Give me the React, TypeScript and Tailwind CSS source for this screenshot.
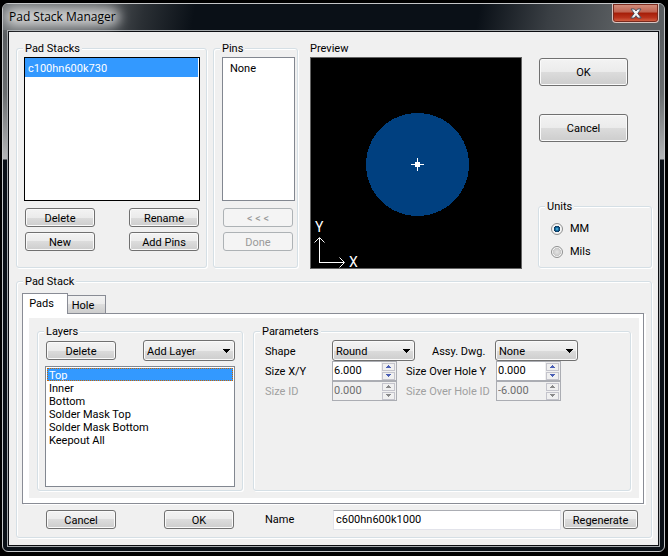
import { useState } from 'react';
import type { ReactNode } from 'react';
import clsx from 'clsx';

const layers = ['Top', 'Inner', 'Bottom', 'Solder Mask Top', 'Solder Mask Bottom', 'Keepout All'];

const faceStyle =
  'bg-[linear-gradient(#f3f3f3,#ebebeb_50%,#dcdcdc_50%,#cdcdcd)] shadow-[inset_0_0_0_1px_#fafafa]';

interface GroupBoxProps {
  title: string;
  className?: string;
  children: ReactNode;
}

function GroupBox({ title, className, children }: GroupBoxProps) {
  return (
    <fieldset
      className={clsx(
        'min-w-0 rounded-[3px] border border-[#d5dfe5] shadow-[1px_1px_0_#fff,inset_1px_1px_0_#fff]',
        className
      )}
    >
      <legend className="ml-[6px] h-[14px] bg-[#f0f0f0] px-[2px] leading-[16px]">{title}</legend>
      {children}
    </fieldset>
  );
}

interface ButtonProps {
  children: ReactNode;
  className?: string;
  disabled?: boolean;
}

function Button({ children, className = 'h-[19px] w-[70px]', disabled }: ButtonProps) {
  return (
    <button
      type="button"
      disabled={disabled}
      className={clsx(
        'flex shrink-0 items-center justify-center rounded-[3px] border pt-[2px]',
        disabled ? 'border-[#adb2b5] bg-[#f4f4f4] text-[#9a9a9a]' : ['border-[#707070]', faceStyle],
        className
      )}
    >
      {children}
    </button>
  );
}

interface DropDownProps {
  id: string;
  options: string[];
  label?: string;
  className: string;
}

function DropDown({ id, options, label, className }: DropDownProps) {
  return (
    <div className={clsx('relative h-[21px] shrink-0', className)}>
      <select
        id={id}
        aria-label={label}
        className={clsx(
          'h-full w-full appearance-none rounded-[3px] border border-[#707070] pt-[2px] pl-[3px]',
          faceStyle
        )}
      >
        {options.map((option) => (
          <option key={option}>{option}</option>
        ))}
      </select>
      <svg
        className="pointer-events-none absolute top-[9px] right-[5px]"
        width="7"
        height="4"
        viewBox="0 0 7 4"
        shapeRendering="crispEdges"
      >
        <path d="M0 0h7v1h-1v1h-1v1h-1v1h-1v-1h-1v-1h-1v-1h-1z" fill="#000" />
      </svg>
    </div>
  );
}

interface SpinnerProps {
  id: string;
  initial: number;
  disabled?: boolean;
}

function Spinner({ id, initial, disabled }: SpinnerProps) {
  const [value, setValue] = useState(initial.toFixed(3));
  const step = (delta: number) => setValue((Number(value) + delta).toFixed(3));
  const arrow = disabled ? '#8a8a8a' : '#4a5fb5';
  const stepButton =
    'flex h-2 w-[13px] items-center justify-center border border-[#c4c4cc] bg-[#f0f0f0]';

  return (
    <div
      className={clsx(
        'flex h-5 w-[65px] shrink-0 border border-[#abadb3]',
        disabled ? 'bg-[#f0f0f0] text-[#6d6d6d]' : 'bg-white'
      )}
    >
      <input
        id={id}
        value={value}
        disabled={disabled}
        onChange={(e) => setValue(e.target.value)}
        className="h-4 w-0 min-w-0 flex-1 pl-px outline-none"
      />
      <div className="flex flex-col justify-center gap-px bg-[#f0f0f0] px-px">
        <button type="button" aria-label="Increase" disabled={disabled} onClick={() => step(0.1)} className={stepButton}>
          <svg width="5" height="3" viewBox="0 0 5 3" shapeRendering="crispEdges">
            <path d="M2 0h1v1h1v1h1v1h-5v-1h1v-1h1z" fill={arrow} />
          </svg>
        </button>
        <button type="button" aria-label="Decrease" disabled={disabled} onClick={() => step(-0.1)} className={stepButton}>
          <svg width="5" height="3" viewBox="0 0 5 3" shapeRendering="crispEdges">
            <path d="M0 0h5v1h-1v1h-1v1h-1v-1h-1v-1h-1z" fill={arrow} />
          </svg>
        </button>
      </div>
    </div>
  );
}

function Preview() {
  return (
    <div className="flex w-[212px] shrink-0 flex-col gap-[2px]">
      <h2 className="h-[14px] leading-[16px]">Preview</h2>
      <svg viewBox="0 0 210 210" className="w-full border border-[#646464] bg-black">
        <circle cx="106.5" cy="106.5" r="51.5" fill="#004080" shapeRendering="crispEdges" />
        <g stroke="#fff" fill="none">
          <path d="M106.5 100v13M100 106.5h13" />
          <path d="M8.5 180v25M8 204.5h25" />
          <path d="M3.5 184.5l5-5l5 5M28.5 199.5l5 5l-5 5" />
        </g>
        <path d="M104 104h5v5h-5z" fill="#fff" />
        <text x="4" y="174" fill="#fff" fontSize="14">Y</text>
        <text x="38" y="209" fill="#fff" fontSize="14">X</text>
      </svg>
    </div>
  );
}

function TitleBar() {
  return (
    <header className="flex h-[26px] items-start justify-between bg-[linear-gradient(100deg,#707476_0,#5a5e61_90px,#2a2f34_140px,#0a1017_190px,#0a1017_470px,#3a3f44_540px,#5a5e61_610px)] pr-[5px] pl-[6px]">
      <div className="relative">
        <div className="absolute -inset-x-1 inset-y-1 rounded-full bg-white/70 blur-[6px]" />
        <h1 className="relative font-['Open_Sans',sans-serif] text-[12px] leading-[26px]">Pad Stack Manager</h1>
      </div>
      <button
        type="button"
        aria-label="Close"
        className="flex h-[19px] w-[47px] items-center justify-center rounded-b-[4px] border border-t-0 border-[#d9c4c0] bg-[linear-gradient(#d5917f,#bf6250_45%,#a51d08_50%,#b8321c_75%,#d86a4c)] shadow-[inset_0_0_0_1px_#7a2a1d]"
      >
        <svg width="12" height="11" viewBox="0 0 12 11">
          <path
            d="M1 1h3.4l1.6 2l1.6-2h3.4l-3.2 4.4l3.4 4.6h-3.4l-1.8-2.3l-1.8 2.3h-3.4l3.4-4.6z"
            fill="#f4f4f4"
            stroke="#4b5262"
            strokeWidth="1"
          />
        </svg>
      </button>
    </header>
  );
}

function Units() {
  const [unit, setUnit] = useState('MM');

  return (
    <GroupBox title="Units" className="h-[69px]">
      <div className="flex flex-col gap-[9px] pt-[9px] pl-3">
        {['MM', 'Mils'].map((name) => (
          <label key={name} className="flex items-center gap-[7px]">
            <input
              type="radio"
              name="unit"
              checked={unit === name}
              onChange={() => setUnit(name)}
              className="size-3 appearance-none rounded-full border border-[#8e8f8f] bg-[radial-gradient(circle,#e4e4e4,#c8c8c8_55%,#f4f4f4_60%)] checked:bg-[radial-gradient(circle,#6fd0f5,#1672a8_20%,#0b3358_42%,#f4f4f4_50%)]"
            />
            {name}
          </label>
        ))}
      </div>
    </GroupBox>
  );
}

function LayerGroup() {
  const [selected, setSelected] = useState('Top');

  return (
    <GroupBox title="Layers" className="w-[206px] shrink-0">
      <div className="px-[7px] pt-[2px] pb-[3px]">
        <div className="flex items-center justify-between pl-px">
          <Button>Delete</Button>
          <DropDown id="add-layer" label="Add Layer" options={['Add Layer']} className="w-[92px]" />
        </div>
        <ul role="listbox" aria-label="Layers" className="mt-[5px] h-[121px] border border-[#828790] bg-white p-px">
          {layers.map((layer) => (
            <li
              key={layer}
              role="option"
              aria-selected={layer === selected}
              onClick={() => setSelected(layer)}
              className={clsx(
                'h-[13px] pl-[2px] leading-[15px]',
                layer === selected && 'bg-[#3399ff] text-white outline-1 -outline-offset-1 outline-dotted outline-[#cc6600]'
              )}
            >
              {layer}
            </li>
          ))}
        </ul>
      </div>
    </GroupBox>
  );
}

function Parameters() {
  return (
    <GroupBox title="Parameters" className="flex-1">
      <div className="pt-[2px] pl-[11px]">
        <div className="flex items-center">
          <label htmlFor="shape" className="w-[67px] pt-[2px]">Shape</label>
          <DropDown id="shape" options={['Round', 'Square', 'Oval']} className="w-[83px]" />
          <label htmlFor="assy" className="w-20 pt-[2px] pl-[17px]">Assy. Dwg.</label>
          <DropDown id="assy" options={['None', 'Round', 'Square']} className="w-[83px]" />
        </div>
        <div className="flex items-center">
          <label htmlFor="size-xy" className="w-[67px] pt-[2px]">Size X/Y</label>
          <Spinner id="size-xy" initial={6} />
          <label htmlFor="over-y" className="w-[99px] pt-[2px] pl-[9px]">Size Over Hole Y</label>
          <Spinner id="over-y" initial={0} />
        </div>
        <div className="flex items-center text-[#a0a0a0]">
          <label htmlFor="size-id" className="w-[67px] pt-[2px]">Size ID</label>
          <Spinner id="size-id" initial={0} disabled />
          <label htmlFor="over-id" className="w-[99px] pt-[2px] pl-[9px]">Size Over Hole ID</label>
          <Spinner id="over-id" initial={-6} disabled />
        </div>
      </div>
    </GroupBox>
  );
}

export default function App() {
  return (
    <div className="min-h-screen bg-black pt-[3px] pr-[3px] pb-[3px] pl-[2px] font-[Roboto,sans-serif] text-[11px] leading-[14px] text-black">
      <div className="overflow-hidden rounded-[6px] border border-[#c4c6c8] bg-[linear-gradient(#5a5e61_30px,#6a6e70_90px,#b4b6b8_155px,#0a1017_156px)]">
        <TitleBar />
        <main className="mx-1 mb-1 border border-[#a4a8ab]">
          <div className="border border-[#0a0c10] bg-[#f0f0f0] pt-[9px] pr-[6px] pb-[7px] pl-[7px]">
            <div className="flex items-start">
              <GroupBox title="Pad Stacks" className="flex-1">
                <div className="pt-[2px] pr-[6px] pb-4 pl-[7px]">
                  <ul role="listbox" aria-label="Pad Stacks" className="h-36 border border-black bg-white pr-px">
                    <li role="option" aria-selected="true" className="h-[19px] bg-[#3399ff] pl-[3px] leading-[21px] text-white">
                      c100hn600k730
                    </li>
                  </ul>
                  <div className="mt-[7px] flex flex-wrap justify-between gap-y-[5px] px-px">
                    <Button>Delete</Button>
                    <Button>Rename</Button>
                    <Button>New</Button>
                    <Button>Add Pins</Button>
                  </div>
                </div>
              </GroupBox>
              <GroupBox title="Pins" className="mr-3 ml-[6px] w-[85px] shrink-0">
                <div className="pt-[2px] pr-[2px] pb-4 pl-2">
                  <ul role="listbox" aria-label="Pins" className="h-36 border border-[#828790] bg-white">
                    <li role="option" aria-selected="false" className="h-[19px] pl-[7px] leading-[21px]">None</li>
                  </ul>
                  <div className="mt-[7px] flex flex-col gap-[5px] pl-px">
                    <Button disabled>&lt; &lt; &lt;</Button>
                    <Button disabled>Done</Button>
                  </div>
                </div>
              </GroupBox>
              <Preview />
              <div className="ml-4 flex w-[114px] shrink-0 flex-col">
                <div className="mb-[57px] flex flex-col gap-7 pt-[17px] pl-px">
                  <Button className="h-7 w-[89px]">OK</Button>
                  <Button className="h-7 w-[89px]">Cancel</Button>
                </div>
                <Units />
              </div>
            </div>

            <GroupBox title="Pad Stack" className="mt-[5px]">
              <div className="pt-[5px] pr-[7px] pb-[7px] pl-[5px]">
                <div role="tablist" className="flex items-end">
                  <button
                    type="button"
                    role="tab"
                    aria-selected="true"
                    className="relative z-10 -mb-px h-[21px] w-[46px] border border-b-0 border-[#898c95] bg-white pr-[7px]"
                  >
                    Pads
                  </button>
                  <button
                    type="button"
                    role="tab"
                    aria-selected="false"
                    className="h-[18px] w-[38px] border border-b-0 border-l-0 border-[#898c95] bg-[linear-gradient(#f2f2f2,#ebebeb_50%,#dddddd_50%,#cdcdcd)] pt-[2px] pr-[7px]"
                  >
                    Hole
                  </button>
                </div>
                <div
                  role="tabpanel"
                  className="border border-[#898c95] bg-white pt-1 pr-1 pb-[5px] pl-[6px] shadow-[2px_1px_0_#fff]"
                >
                  <div className="flex gap-[10px] bg-[#f0f0f0] px-2 pt-[6px] pb-[7px]">
                    <LayerGroup />
                    <Parameters />
                  </div>
                </div>
                <div className="mt-[5px] flex h-[21px] items-center pr-[6px] pl-6">
                  <Button>Cancel</Button>
                  <Button className="mr-[31px] ml-12 h-[19px] w-[70px]">OK</Button>
                  <label htmlFor="name" className="w-[68px]">Name</label>
                  <input
                    id="name"
                    defaultValue="c600hn600k1000"
                    className="mr-[2px] h-5 min-w-0 flex-1 border border-[#e2e3ea] border-t-[#abadb3] bg-white pl-[2px]"
                  />
                  <Button className="h-[19px] w-[75px]">Regenerate</Button>
                </div>
              </div>
            </GroupBox>
          </div>
        </main>
      </div>
    </div>
  );
}
